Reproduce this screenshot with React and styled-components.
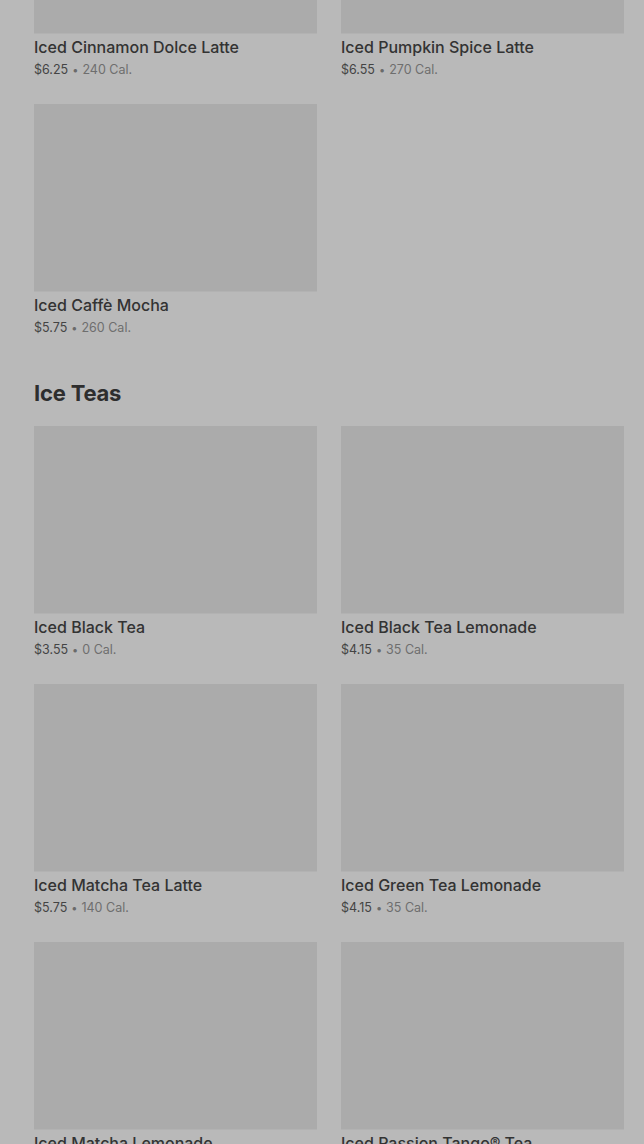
import React from "react";
import styled, { createGlobalStyle } from "styled-components";

const GlobalStyle = createGlobalStyle`
  html, body {
    margin: 0;
    padding: 0;
    background: #b9b9b9;
    font-family: Inter, "Noto Sans", sans-serif;
  }
`;

const sections = [
  {
    title: null,
    items: [
      { name: "Iced Cinnamon Dolce Latte", price: "$6.25", cal: "240 Cal." },
      { name: "Iced Pumpkin Spice Latte", price: "$6.55", cal: "270 Cal." },
      { name: "Iced Caffè Mocha", price: "$5.75", cal: "260 Cal." },
    ],
  },
  {
    title: "Ice Teas",
    items: [
      { name: "Iced Black Tea", price: "$3.55", cal: "0 Cal." },
      { name: "Iced Black Tea Lemonade", price: "$4.15", cal: "35 Cal." },
      { name: "Iced Matcha Tea Latte", price: "$5.75", cal: "140 Cal." },
      { name: "Iced Green Tea Lemonade", price: "$4.15", cal: "35 Cal." },
      { name: "Iced Matcha Lemonade", price: "$5.75", cal: "130 Cal." },
      { name: "Iced Passion Tango® Tea", price: "$3.55", cal: "0 Cal." },
    ],
  },
];

export default function App() {
  return (
    <>
      <GlobalStyle />
      <Viewport>
        <Menu>
          {sections.map((section, i) => (
            <Section key={i}>
              {section.title && <Heading>{section.title}</Heading>}
              <Grid>
                {section.items.map((item) => (
                  <Card key={item.name}>
                    <Thumb />
                    <Name>{item.name}</Name>
                    <Meta>
                      <Price>{item.price}</Price>
                      <Dot>•</Dot>
                      <Cal>{item.cal}</Cal>
                    </Meta>
                  </Card>
                ))}
              </Grid>
            </Section>
          ))}
        </Menu>
      </Viewport>
    </>
  );
}

const Viewport = styled.div`
  height: 100vh;
  overflow: hidden;
  background: #b9b9b9;
`;

const Menu = styled.div`
  margin-top: -154px;
  padding: 0 20px 0 34px;
  display: flex;
  flex-direction: column;
  gap: 38px;
`;

const Section = styled.section`
  display: flex;
  flex-direction: column;
  gap: 19px;
`;

const Heading = styled.h2`
  margin: 0;
  font-size: 22px;
  line-height: 28px;
  font-weight: 700;
  color: #2e2e2e;
  letter-spacing: -0.2px;
`;

const Grid = styled.div`
  display: grid;
  grid-template-columns: 283px 283px;
  column-gap: 24px;
  row-gap: 21px;
`;

const Card = styled.div`
  display: flex;
  flex-direction: column;
`;

const Thumb = styled.div`
  height: 187px;
  background: #ababab;
  border-bottom: 1px solid #b2b2b2;
`;

const Name = styled.div`
  margin-top: 3px;
  font-size: 16px;
  line-height: 20px;
  font-weight: 500;
  color: #333333;
`;

const Meta = styled.div`
  font-size: 12.5px;
  line-height: 26px;
  display: flex;
  align-items: baseline;
  gap: 4px;
`;

const Price = styled.span`
  color: #444444;
`;

const Dot = styled.span`
  color: #6a6a6a;
  font-size: 11px;
`;

const Cal = styled.span`
  color: #6e6e6e;
`;
